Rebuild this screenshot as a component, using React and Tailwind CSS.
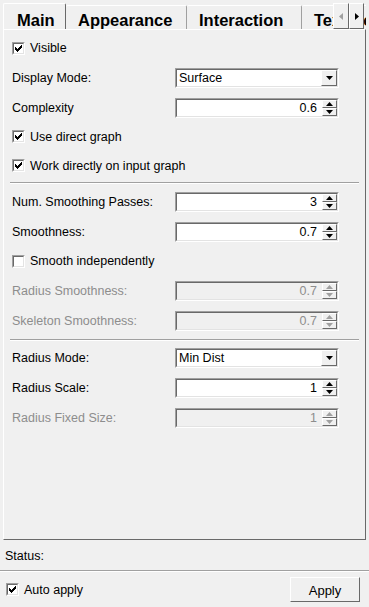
import React from 'react';

const Tri = ({ dir = 'down', color = '#000' }) => {
    const d = {
        up: 'M0 4h7L3.5 0z',
        down: 'M0 0h7L3.5 4z',
    }[dir];
    return (
        <svg width="7" height="4" viewBox="0 0 7 4" className="block">
            <path d={d} fill={color} />
        </svg>
    );
};

const SideTri = ({ dir, color }) => (
    <svg width="4" height="7" viewBox="0 0 4 7" className="block">
        <path d={dir === 'left' ? 'M4 0v7L0 3.5z' : 'M0 0v7L4 3.5z'} fill={color} />
    </svg>
);

const Sunken = ({ disabled, className = '', children }) => (
    <div className={`border border-t-[#a0a0a0] border-l-[#a0a0a0] border-r-white border-b-white ${className}`}>
        <div className={`flex h-full items-center border border-t-[#696969] border-l-[#696969] border-r-[#e3e3e3] border-b-[#e3e3e3] ${disabled ? 'bg-[#f0f0f0]' : 'bg-white'}`}>
            {children}
        </div>
    </div>
);

const Raised = ({ className = '', children }) => (
    <div className={`flex items-center justify-center border border-t-white border-l-white border-r-[#696969] border-b-[#696969] bg-[#f0f0f0] ${className}`}>
        {children}
    </div>
);

const Check = ({ checked }) => (
    <div className="h-[13px] w-[13px] shrink-0 border border-t-[#a0a0a0] border-l-[#a0a0a0] border-r-white border-b-white">
        <div className="flex h-full w-full items-center justify-center border border-t-[#696969] border-l-[#696969] border-r-[#e3e3e3] border-b-[#e3e3e3] bg-white">
            {checked && (
                <svg width="7" height="7" viewBox="0 0 7 7" shapeRendering="crispEdges" className="block">
                    <path d="M0 2h1v1h1v1h1v-1h1v-1h1v-1h1v-1h1v3h-1v1h-1v1h-1v1h-1v1h-1v-1h-1v-1h-1z" fill="#000" />
                </svg>
            )}
        </div>
    </div>
);

const CheckRow = ({ label, checked, h = 'h-[30px]' }) => (
    <div className={`flex items-center gap-[5px] ${h}`}>
        <Check checked={checked} />
        <span className="pt-[1px]">{label}</span>
    </div>
);

const Field = ({ label, disabled, h = 'h-[30px]', children }) => (
    <div className={`flex items-center ${h}`}>
        <div className={`w-[163px] shrink-0 pt-[1px] ${disabled ? 'text-[#8d8d8d]' : ''}`}>{label}</div>
        {children}
    </div>
);

const Spin = ({ value, disabled }) => (
    <Sunken disabled={disabled} className="h-[20px] w-[164px]">
        <div className={`flex-1 pr-[5px] pt-[1px] text-right ${disabled ? 'text-[#8d8d8d]' : ''}`}>{value}</div>
        <div className="flex h-full w-[15px] flex-col">
            <Raised className="h-[8px]">
                <Tri dir="up" color={disabled ? '#a0a0a0' : '#000'} />
            </Raised>
            <Raised className="h-[8px]">
                <Tri dir="down" color={disabled ? '#a0a0a0' : '#000'} />
            </Raised>
        </div>
    </Sunken>
);

const Combo = ({ value }) => (
    <Sunken className="h-[20px] w-[164px]">
        <div className="flex-1 pl-[2px] pt-[1px]">{value}</div>
        <Raised className="h-full w-[16px]">
            <Tri dir="down" />
        </Raised>
    </Sunken>
);

const Separator = ({ className = '' }) => (
    <div className={`h-[2px] border-t border-t-[#a0a0a0] border-b border-b-white ${className}`} />
);

const tabs = [
    { name: 'Main', w: 'w-[63px]' },
    { name: 'Appearance', w: 'w-[121px]' },
    { name: 'Interaction', w: 'w-[115px]' },
    { name: 'Texture', w: 'w-[90px]' },
];

export default function App() {
    return (
        <div className="flex h-[607px] w-[369px] flex-col overflow-hidden bg-[#f0f0f0] font-['Liberation_Sans',Arial,sans-serif] text-[12.5px] leading-[15px] text-black">
            <div className="px-[3px]">
                {/* tab bar */}
                <div className="relative flex h-[29px] items-end overflow-hidden">
                    {tabs.map((t, i) =>
                        i === 0 ? (
                            <div
                                key={t.name}
                                className={`relative z-10 -mb-[1px] h-[27px] shrink-0 rounded-t-[2px] border-l border-t border-r border-l-white border-t-white border-r-[#696969] bg-[#f0f0f0] pl-[13px] pt-[7px] text-[16.5px] font-bold leading-[18px] ${t.w}`}
                            >
                                {t.name}
                            </div>
                        ) : (
                            <div
                                key={t.name}
                                className={`h-[24px] shrink-0 rounded-t-[2px] border-t border-r border-t-white border-r-[#a0a0a0] bg-[#f0f0f0] pl-[12px] pt-[5px] text-[16.5px] font-bold leading-[18px] ${t.w}`}
                            >
                                {t.name}
                            </div>
                        )
                    )}
                    <div className="absolute left-[330px] top-[3px] z-20 flex h-[26px]">
                        <Raised className="h-full w-[16px]">
                            <SideTri dir="left" color="#a0a0a0" />
                        </Raised>
                        <Raised className="h-full w-[15px]">
                            <SideTri dir="right" color="#000" />
                        </Raised>
                    </div>
                </div>

                {/* panel */}
                <div className="h-[511px] border border-t-white border-l-white border-r-[#696969] border-b-[#696969]">
                    <div className="flex h-full flex-col pl-[8px] pt-[3px]">
                        <CheckRow label="Visible" checked />
                        <Field label="Display Mode:">
                            <Combo value="Surface" />
                        </Field>
                        <Field label="Complexity" h="h-[29px]">
                            <Spin value="0.6" />
                        </Field>
                        <CheckRow label="Use direct graph" checked h="h-[29px]" />
                        <CheckRow label="Work directly on input graph" checked h="h-[29px]" />

                        <Separator className="-ml-[2px] mt-[2px] w-[349px]" />

                        <div className="mt-[3px]">
                            <Field label="Num. Smoothing Passes:">
                                <Spin value="3" />
                            </Field>
                            <Field label="Smoothness:" h="h-[29px]">
                                <Spin value="0.7" />
                            </Field>
                            <CheckRow label="Smooth independently" />
                            <Field label="Radius Smoothness:" disabled>
                                <Spin value="0.7" disabled />
                            </Field>
                            <Field label="Skeleton Smoothness:" disabled>
                                <Spin value="0.7" disabled />
                            </Field>
                        </div>

                        <Separator className="-ml-[2px] mt-[3px] w-[349px]" />

                        <div className="mt-[2px]">
                            <Field label="Radius Mode:">
                                <Combo value="Min Dist" />
                            </Field>
                            <Field label="Radius Scale:">
                                <Spin value="1" />
                            </Field>
                            <Field label="Radius Fixed Size:" disabled>
                                <Spin value="1" disabled />
                            </Field>
                        </div>
                    </div>
                </div>
            </div>

            {/* status */}
            <div className="flex h-[30px] items-center pl-[5px] pt-[3px]">Status:</div>
            <Separator />

            {/* bottom bar */}
            <div className="flex h-[35px] items-center justify-between pl-[6px] pr-[9px]">
                <div className="flex items-center gap-[5px]">
                    <Check checked />
                    <span className="pt-[1px]">Auto apply</span>
                </div>
                <div className="flex h-[25px] w-[70px] items-center justify-center border border-t-white border-l-white border-r-[#696969] border-b-[#696969] bg-[#f0f0f0] pt-[1px] text-[13px]">
                    Apply
                </div>
            </div>
        </div>
    );
}
